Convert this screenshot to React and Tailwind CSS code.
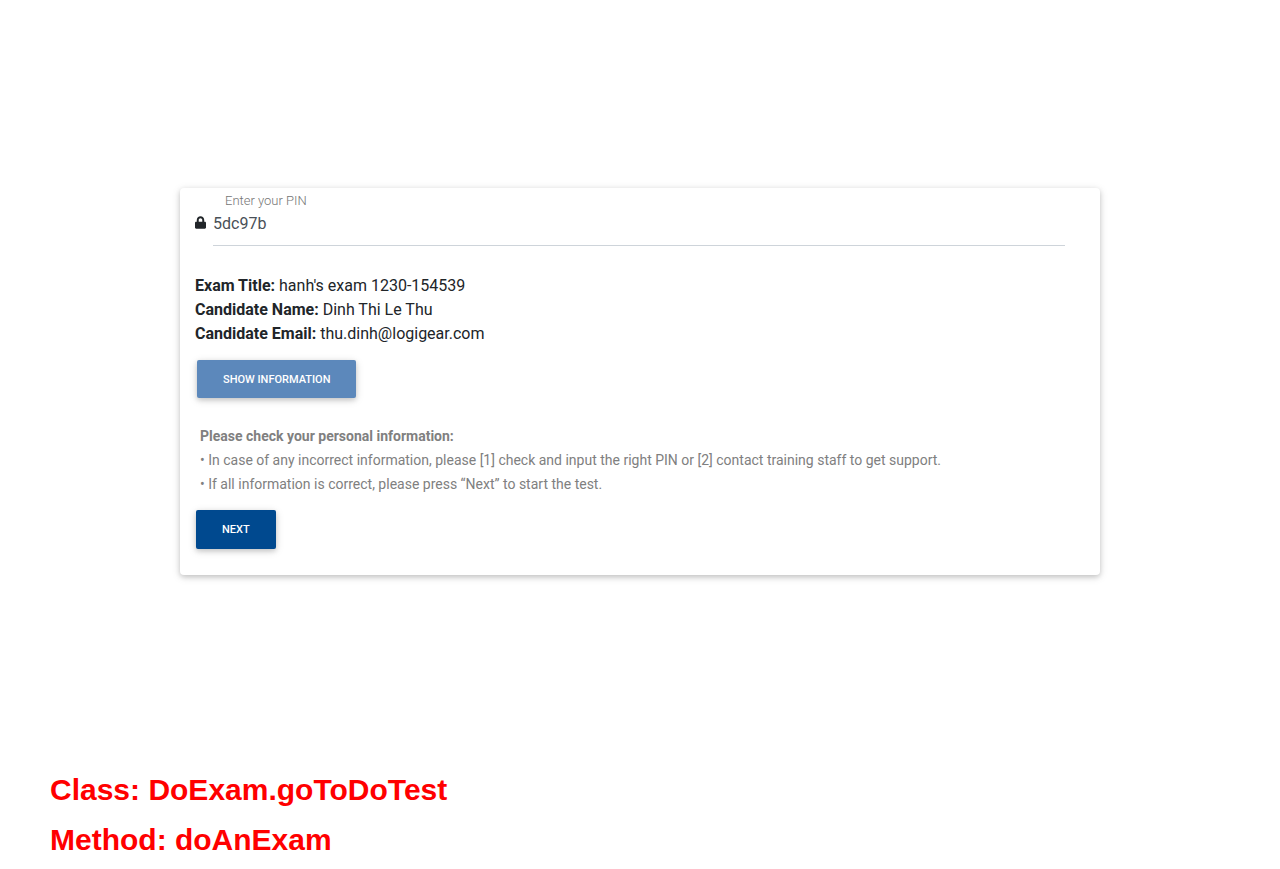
import React, { useState } from "react";
import { FaLock } from "react-icons/fa";

const details = [
  ["Exam Title:", "hanh's exam 1230-154539"],
  ["Candidate Name:", "Dinh Thi Le Thu"],
  ["Candidate Email:", "thu.dinh@logigear.com"],
];

export default function App() {
  const [pin, setPin] = useState("5dc97b");
  return (
    <div className="flex min-h-screen flex-col justify-between bg-white pt-[188px] font-['Roboto',sans-serif] text-[#212529]">
      <main className="mx-auto w-full max-w-[920px] rounded bg-white px-[15px] pt-1 pb-[26px] shadow-[0_2px_5px_0_rgba(0,0,0,0.16),0_2px_10px_0_rgba(0,0,0,0.12)]">
        <label htmlFor="pin" className="block pl-[30px] text-[13px] leading-[18px] font-light text-[#757575]">
          Enter your PIN
        </label>
        <div className="flex gap-[7px] pr-5">
          <FaLock className="mt-[6px] h-[13px] w-[11px] shrink-0" />
          <input
            id="pin"
            value={pin}
            onChange={(e) => setPin(e.target.value)}
            className="h-9 min-w-0 flex-1 border-b border-[#ced4da] pb-[9px] text-base leading-6 font-normal text-[#495057] outline-none"
          />
        </div>
        <div className="mt-7 text-base leading-6 font-normal">
          {details.map(([name, value]) => (
            <p key={name}>
              <strong className="font-bold">{name}</strong> {value}
            </p>
          ))}
        </div>
        <button className="mt-[14px] ml-[2px] block h-[38px] rounded-[2px] bg-[#5c88bb] px-[26px] pt-[2px] text-[11px] font-medium text-white uppercase shadow-[0_2px_5px_0_rgba(0,0,0,0.16),0_2px_10px_0_rgba(0,0,0,0.12)]">
          Show information
        </button>
        <div className="mt-[26px] pl-[5px] text-sm leading-6 text-[#808080]">
          <p className="font-bold">Please check your personal information:</p>
          <p>• In case of any incorrect information, please [1] check and input the right PIN or [2] contact training staff to get support.</p>
          <p>• If all information is correct, please press “Next” to start the test.</p>
        </div>
        <button className="mt-[14px] ml-px block h-[39px] rounded-[2px] bg-[#00498f] px-[26px] pt-[2px] text-[11px] font-medium text-white uppercase shadow-[0_2px_5px_0_rgba(0,0,0,0.16),0_2px_10px_0_rgba(0,0,0,0.12)]">
          Next
        </button>
      </main>
      <footer className="pb-1 pl-[50px] font-['Liberation_Sans',Arial,sans-serif] text-[30px] leading-[50px] font-bold text-[#ff0000]">
        <p>Class: DoExam.goToDoTest</p>
        <p>Method: doAnExam</p>
      </footer>
    </div>
  );
}
